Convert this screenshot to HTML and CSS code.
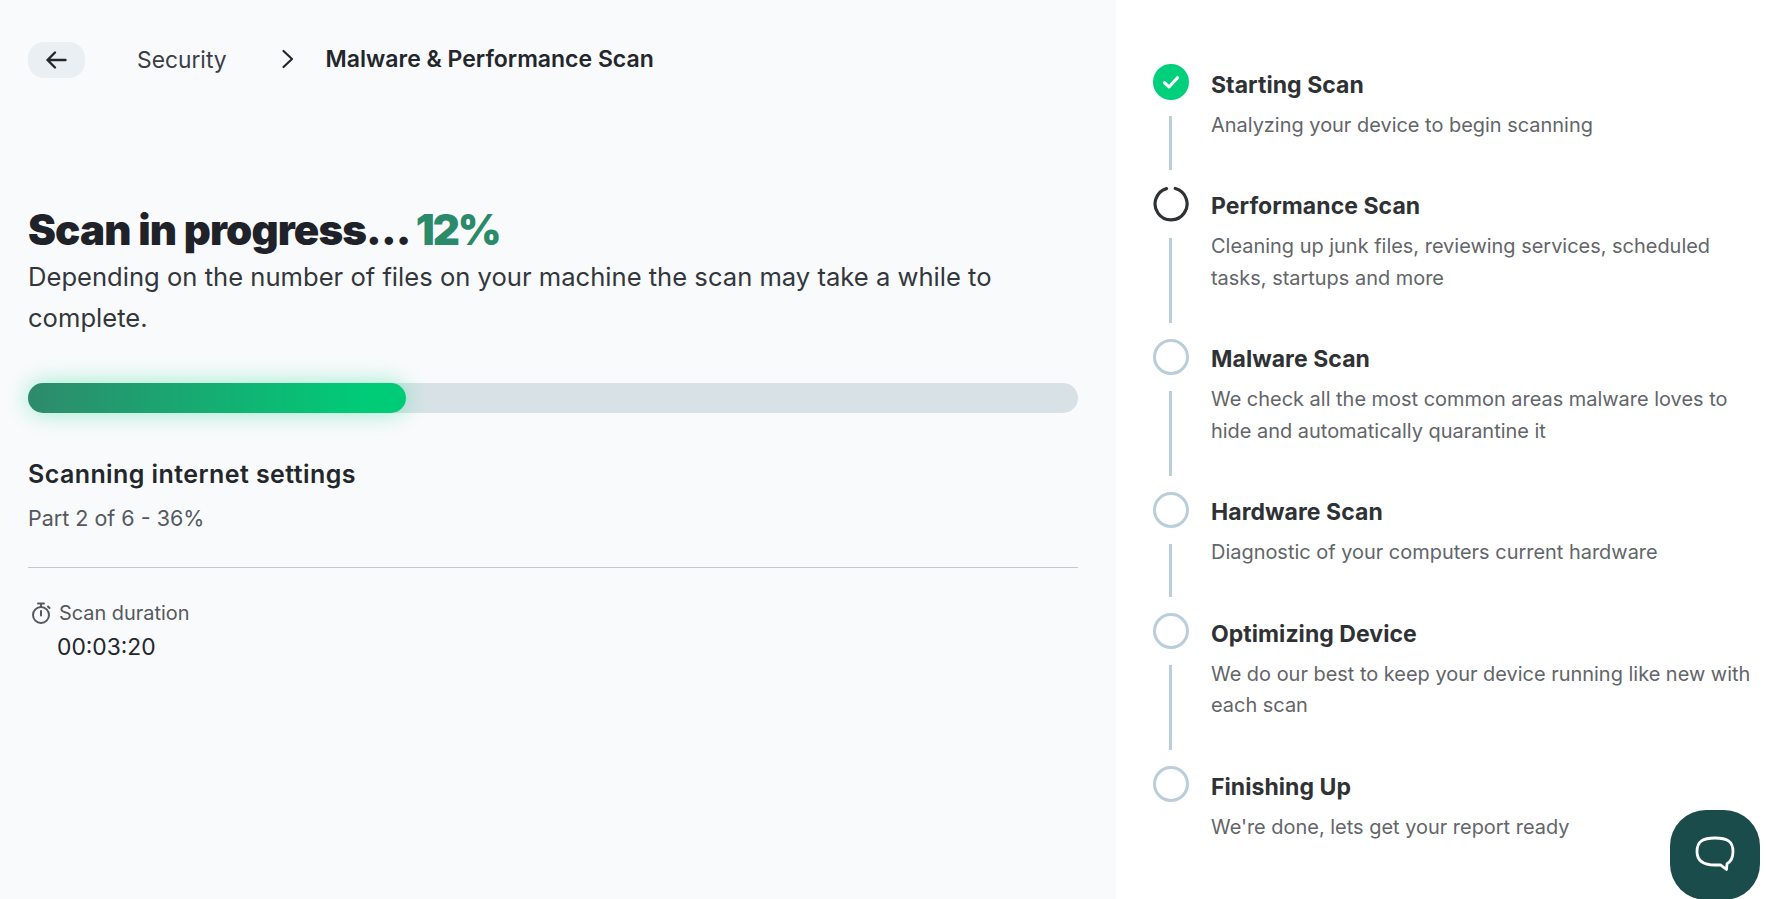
FILE: index.html
```html
<!DOCTYPE html>
<html lang="en">
<head>
<meta charset="utf-8">
<title>Malware &amp; Performance Scan</title>
<link rel="stylesheet" href="styles.css">
</head>
<body>
<div class="page">
  <main class="main">
    <nav class="crumbs">
      <button class="back" aria-label="Back">
        <svg width="24" height="24" viewBox="0 0 24 24" fill="none" stroke="#23272c" stroke-width="2.4" stroke-linecap="round" stroke-linejoin="round"><path d="M21.5 12H3.5M11 4.5 3.5 12l7.5 7.5"/></svg>
      </button>
      <span class="crumb">Security</span>
      <svg class="chev" width="16" height="20" viewBox="0 0 16 20" fill="none" stroke="#23272c" stroke-width="2.2" stroke-linecap="round" stroke-linejoin="round"><path d="M3.500 2 12 10l-8.500 8"/></svg>
      <span class="crumb-current">Malware &amp; Performance Scan</span>
    </nav>
    <h1 class="heading">Scan in progress... <span class="pct">12%</span></h1>
    <p class="lead">Depending on the number of files on your machine the scan may take a while to complete.</p>
    <div class="track"><div class="fill"></div></div>
    <h2 class="task">Scanning internet settings</h2>
    <p class="part">Part 2 of 6 - 36%</p>
    <hr class="rule">
    <div class="duration-label">
      <svg width="22" height="24" viewBox="0 0 22 24" fill="none" stroke="#55595e" stroke-width="2" stroke-linecap="round"><circle cx="11" cy="14" r="8"/><path d="M8 2.500h6M11 2.500v3.500M11 10v4.500M18 5.500l1.500 1.500"/></svg>
      <span>Scan duration</span>
    </div>
    <div class="duration">00:03:20</div>
  </main>
  <aside class="side">
    <ol class="steps">
      <li class="step">
        <div class="marker">
          <span class="dot done"><svg width="22" height="22" viewBox="0 0 20 20" fill="none" stroke="#fff" stroke-width="2.800" stroke-linecap="round" stroke-linejoin="round"><path d="M4 10.500 8.200 14.500 16 6"/></svg></span>
          <span class="line"></span>
        </div>
        <div class="body"><h3>Starting Scan</h3><p>Analyzing your device to begin scanning</p></div>
      </li>
      <li class="step">
        <div class="marker">
          <span class="dot"><svg width="36" height="36" viewBox="0 0 36 36" fill="none" stroke="#2f3234" stroke-width="3.200" stroke-linecap="round"><path d="M22.300 2.500A16 16 0 1 1 13.500 2.600"/></svg></span>
          <span class="line"></span>
        </div>
        <div class="body"><h3>Performance Scan</h3><p>Cleaning up junk files, reviewing services, scheduled tasks, startups and more</p></div>
      </li>
      <li class="step">
        <div class="marker"><span class="dot todo"></span><span class="line"></span></div>
        <div class="body"><h3>Malware Scan</h3><p>We check all the most common areas malware loves to hide and automatically quarantine it</p></div>
      </li>
      <li class="step">
        <div class="marker"><span class="dot todo"></span><span class="line"></span></div>
        <div class="body"><h3>Hardware Scan</h3><p>Diagnostic of your computers current hardware</p></div>
      </li>
      <li class="step">
        <div class="marker"><span class="dot todo"></span><span class="line"></span></div>
        <div class="body"><h3>Optimizing Device</h3><p>We do our best to keep your device running like new with each scan</p></div>
      </li>
      <li class="step">
        <div class="marker"><span class="dot todo"></span></div>
        <div class="body"><h3>Finishing Up</h3><p>We're done, lets get your report ready</p></div>
      </li>
    </ol>
  </aside>
</div>
<button class="chat" aria-label="Chat">
  <svg width="40" height="38" viewBox="0 0 40 38" fill="none" stroke="#fff" stroke-width="2.800" stroke-linecap="round" stroke-linejoin="round"><path d="M20 2C8 2 2 5 2 15.500 2 25 8 29 20 29c2 0 3.500 0 5.500-.2L31.500 33.500 32 27.800C36 25.500 38 21.500 38 15.500 38 5 32 2 20 2Z"/></svg>
</button>
</body>
</html>
```
FILE: styles.css
```css
* { box-sizing: border-box; }
html, body { margin: 0; height: 100%; overflow: hidden; }
body { font-family: "Inter", "Liberation Sans", sans-serif; color: #23272c; background: #fff; }
.page { display: flex; height: 899px; }
.main { width: 1116px; background: #f9fafc; padding: 42px 38px 0 28px; }
.crumbs { display: flex; align-items: center; height: 36px; }
.back { width: 57px; height: 36px; border: 0; border-radius: 16px; background: #e9eff3; display: flex; align-items: center; justify-content: center; padding: 0 2px 0 0; }
.crumb { margin: 0 0 2px 52px; font-size: 22.800px; color: #3a3e43; }
.chev { margin: 0 0 2px 53px; }
.crumb-current { margin: 0 0 2px 30px; font-size: 23px; font-weight: 600; }
.heading { margin: 126px 0 0; font-size: 42px; line-height: 52px; font-weight: 900; letter-spacing: -.85px; color: #1f2329; }
.pct { color: #2a8a6a; letter-spacing: -2px; }
.lead { margin: 0; font-size: 25.600px; line-height: 41px; color: #33373c; }
.track { margin-top: 45px; height: 30px; border-radius: 15px; background: #d8e2e6; }
.fill { width: 378px; height: 30px; border-radius: 15px; background: linear-gradient(90deg, #2e8a6c, #00cc78 90%); box-shadow: 0 0 24px rgba(0, 214, 130, .4); }
.task { margin: 45px 0 0; font-size: 25px; line-height: 32px; font-weight: 600; letter-spacing: .42px; }
.part { margin: 12px 0 0; font-size: 21.500px; line-height: 32px; color: #55595e; }
.rule { margin: 33px 0 0; border: 0; border-top: 1px solid #c4c8cc; }
.duration-label { display: flex; align-items: center; gap: 7px; margin-top: 31px; font-size: 19.900px; line-height: 28px; color: #55595e; padding-left: 2px; }
.duration { margin: 4px 0 0 29px; font-size: 22.800px; line-height: 32px; color: #23272c; }
.side { flex: 1; padding: 64px 0 0 36.500px; }
.steps { list-style: none; margin: 0; padding: 0; }
.step { display: flex; gap: 22.500px; }
.marker { display: flex; flex-direction: column; align-items: center; width: 36px; flex: none; }
.dot { width: 36px; height: 36px; border-radius: 50%; flex: none; display: flex; align-items: center; justify-content: center; }
.done { background: #00cf7c; }
.todo { border: 3px solid #b8cfdb; }
.line { flex: 1; width: 3px; margin: 16px 0; background: #b8cfdb; }
.body { padding-bottom: 44.250px; }
.body h3 { margin: 2.500px 0 7.250px; font-size: 23px; line-height: 36px; font-weight: 700; letter-spacing: .05px; color: #2f3234; }
.body p { margin: 0; font-size: 19.950px; line-height: 31.500px; color: #626569; }
.chat { position: fixed; left: 1670px; top: 810px; width: 90px; height: 90px; border: 0; padding: 0; border-radius: 36px; background: #1a4c4c; display: flex; align-items: center; justify-content: center; }
```
